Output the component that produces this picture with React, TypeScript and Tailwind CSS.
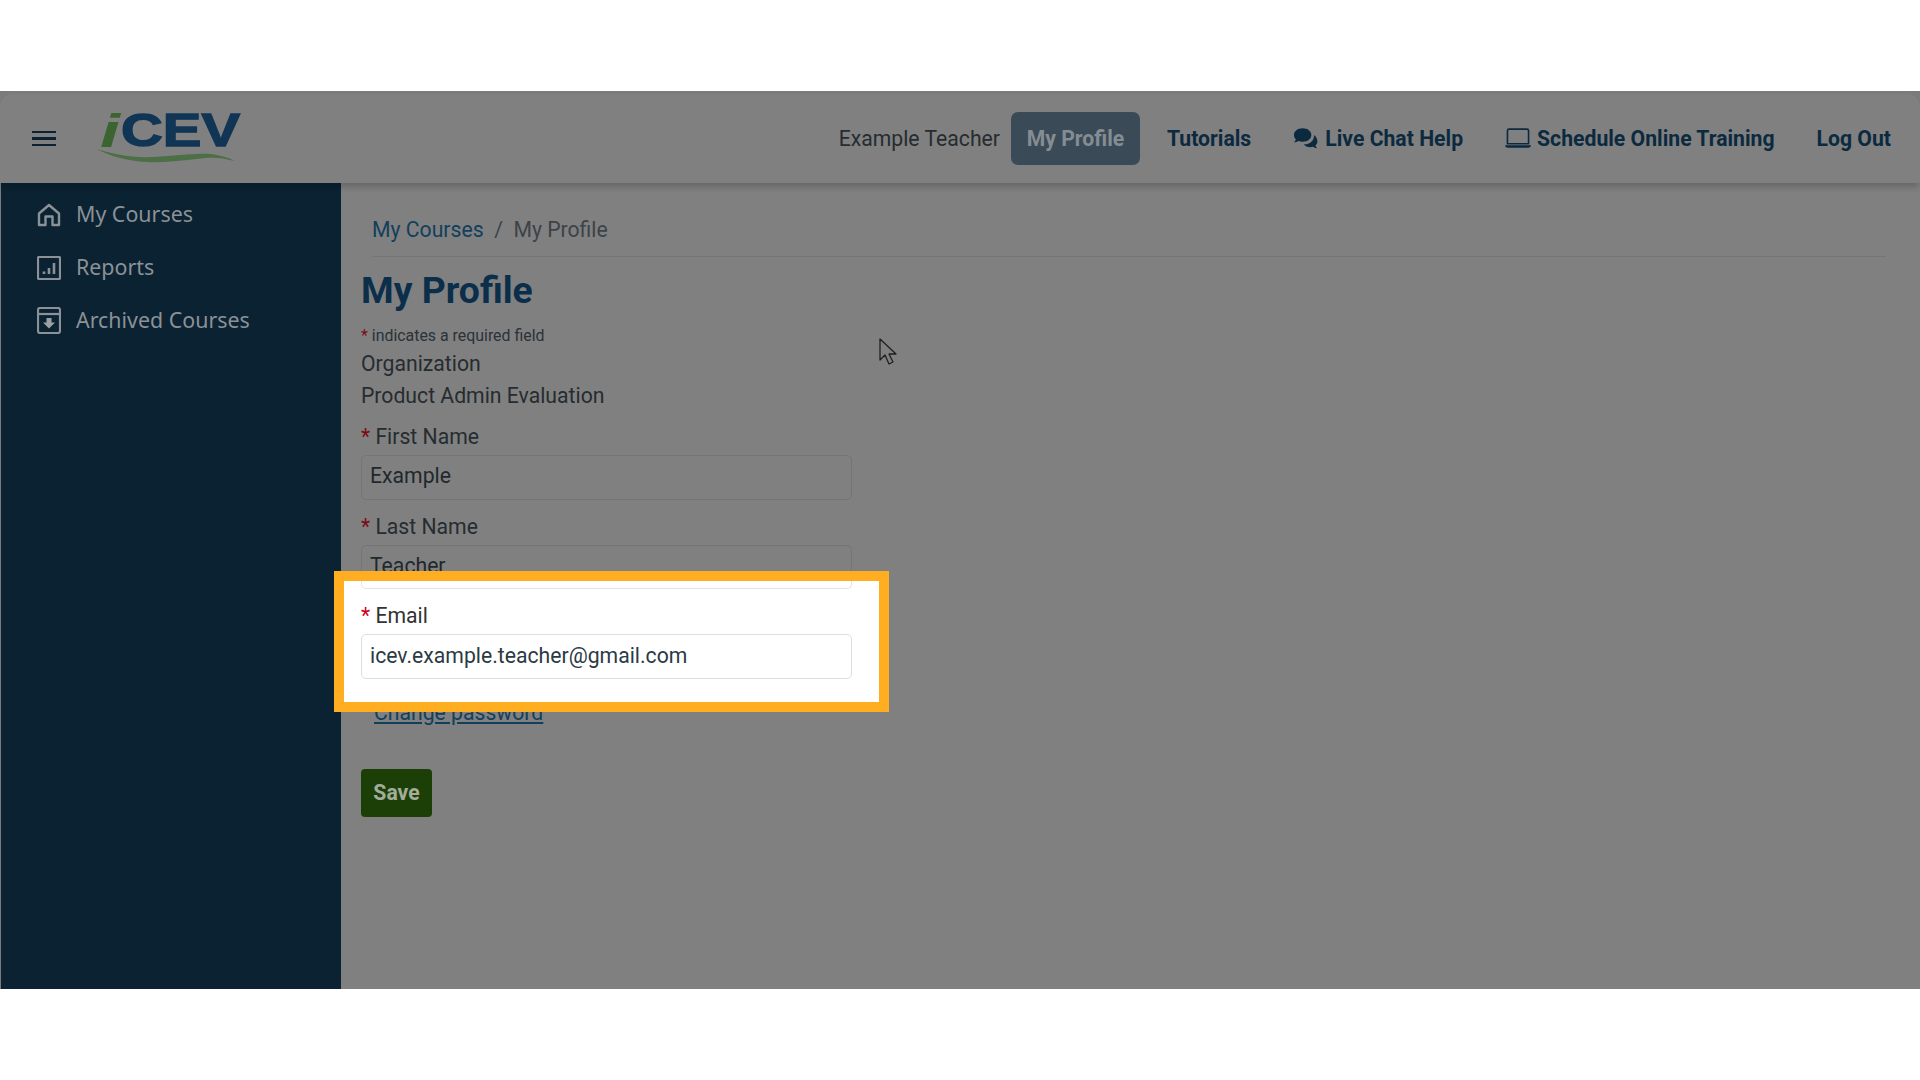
import { BsLaptop } from "react-icons/bs";

const Star = () => <span className="text-[#7a0a14]">*</span>;

function Field({ label, value, className = "mb-[13px]" }: { label: string; value: string; className?: string }) {
  return (
    <div className={className}>
      <label className="block h-[30px] leading-[30px] mb-[3px]"><Star /> {label}</label>
      <div className="h-[45px] w-[491px] rounded-[5px] border border-[#757575] px-[8px] leading-[40px] text-[#20282e]">{value}</div>
    </div>
  );
}

function HomeIcon() {
  return (
    <svg viewBox="0 0 24 24" className="w-[24px] h-[24px]" fill="none" stroke="#8b9196" strokeWidth="2.4">
      <path d="M2 22V10.5L12 2l10 8.5V22h-6.5v-8.5h-7V22z" strokeLinejoin="round" />
    </svg>
  );
}
function ReportIcon() {
  return (
    <svg viewBox="0 0 24 24" className="w-[24px] h-[24px]" fill="none" stroke="#8b9196" strokeWidth="2.2">
      <rect x="1" y="1" width="22" height="22" rx="1" />
      <path d="M7 18v-2.5M12 18v-6M17 18V7" strokeWidth="2.6" />
    </svg>
  );
}
function ArchiveIcon() {
  return (
    <svg viewBox="0 0 24 27" className="w-[24px] h-[27px]" fill="none" stroke="#8b9196" strokeWidth="2.2">
      <rect x="1" y="1" width="22" height="25" rx="2" />
      <path d="M1 7h22" />
      <path d="M9.5 11h5v4.5H18l-6 6-6-6h3.5z" fill="#9aa0a4" stroke="none" />
    </svg>
  );
}

function Logo() {
  return (
    <svg width="150" height="70" viewBox="0 -12 150 70" className="block -mt-[12px]">
      <text x="3" y="35" fontFamily="Liberation Sans" fontWeight="700" fontStyle="italic" fontSize="46" fill="#3c6430" textLength="20" lengthAdjust="spacingAndGlyphs">i</text>
      <text x="24" y="34" fontFamily="Liberation Sans" fontWeight="700" fontSize="46" fill="#103555" stroke="#103555" strokeWidth="1.4" textLength="119" lengthAdjust="spacingAndGlyphs">CEV</text>
      <path d="M0 37c16 5 34 9 56 8 24-1 40-4 58-3 8 1 16 3 24 7-12-3-20-4-30-3-20 2-38 5-58 4C30 49 12 44 0 37z" fill="#4c6f45" />
    </svg>
  );
}

function Nav({ icon, label, className = "" }: { icon?: React.ReactNode; label: string; className?: string }) {
  return (
    <span className={`flex items-center font-bold text-[#0c2a3f] ${className}`}>
      {icon}
      {label}
    </span>
  );
}

export default function App() {
  return (
    <div className="relative w-[1920px] h-[1080px] overflow-hidden bg-white font-['Roboto',sans-serif] text-[21.2px] text-[#262c30]">
      <div className="pt-[91px]">
        <div className="h-[898px] bg-[#7b7b7b] pt-[3px] overflow-hidden flex flex-col">
          <header className="relative z-10 h-[89px] shrink-0 flex items-center bg-[#808080] rounded-t-[12px] shadow-[0_5px_6px_-1px_rgba(0,0,0,0.2)]">
            <div className="ml-[32px] w-[24px] flex flex-col gap-[4px]">
              <div className="h-[2.5px] bg-[#0c2233]" />
              <div className="h-[2.5px] bg-[#0c2233]" />
              <div className="h-[2.5px] bg-[#0c2233]" />
            </div>
            <div className="ml-[41px] mt-[4px]"><Logo /></div>
            <div className="ml-auto flex items-center pr-[29px]">
              <span className="mr-[11px]">Example Teacher</span>
              <span className="flex items-center justify-center w-[129px] h-[53px] rounded-[7px] bg-[#3a4a56] font-bold text-[#848d94]">My Profile</span>
              <Nav label="Tutorials" className="ml-[27px]" />
              <Nav
                className="ml-[42px]"
                label="Live Chat Help"
                icon={
                  <svg viewBox="0 0 28 22" className="w-[27px] h-[22px] mr-[5px]" fill="#0c2a3f">
                    <path d="M10 1C4.8 1 1 4 1 8c0 1.8.8 3.4 2 4.6-.4 1.2-1.2 2.2-2 3 1.8 0 3.4-.6 4.6-1.4 1.3.5 2.8.8 4.4.8 5.2 0 9-3 9-7s-3.8-7-9-7z" />
                    <path d="M21.6 7.5c.1.5.2 1 .2 1.5 0 5-4.6 8.6-10 8.6h-.6c1.4 1.9 3.8 3 6.6 3 1 0 2-.2 2.9-.5 1 .7 2.4 1.4 4.3 1.4-.7-.8-1.4-1.8-1.7-2.8 1.2-1 2-2.4 2-4.1 0-2.9-1.7-5.4-3.7-6.6z" />
                  </svg>
                }
              />
              <Nav
                className="ml-[42px]"
                label="Schedule Online Training"
                icon={<BsLaptop className="w-[26px] h-[26px] mr-[6px]" />}
              />
              <Nav label="Log Out" className="ml-[42px]" />
            </div>
          </header>
          <div className="flex flex-1 min-h-0">
            <aside className="ml-[1px] w-[340px] shrink-0 bg-[#0a2232] pt-[5px] font-['Noto_Sans',sans-serif] text-[#8b9196] text-[21.4px]">
              <div className="flex items-center h-[53px] pl-[36px] gap-[15px]"><HomeIcon />My Courses</div>
              <div className="flex items-center h-[53px] pl-[36px] gap-[15px]"><ReportIcon />Reports</div>
              <div className="flex items-center h-[53px] pl-[36px] gap-[15px]"><ArchiveIcon />Archived Courses</div>
            </aside>
            <main className="flex-1 pl-[20px] pt-[32px] bg-[#808080]">
              <nav className="ml-[11px] mr-[34px] h-[42px] border-b border-[#757575] leading-[30px]">
                <span className="text-[#123f5c]">My Courses</span>
                <span className="text-[#3c4348]">&nbsp;&nbsp;/&nbsp;&nbsp;</span>
                <span className="text-[#3c4348]">My Profile</span>
              </nav>
              <h1 className="mt-[11px] h-[44px] leading-[44px] text-[37.3px] font-bold text-[#0b2e4a]">My Profile</h1>
              <p className="mt-[14px] h-[20px] leading-[20px] text-[15.9px] text-[#2b3238]"><Star /> indicates a required field</p>
              <p className="mt-[2px] leading-[32px]">Organization</p>
              <p className="leading-[32px] mb-[10px]">Product Admin Evaluation</p>
              <Field label="First Name" value="Example" className="mb-[12px]" />
              <Field label="Last Name" value="Teacher" />
              <Field label="Email" value="icev.example.teacher@gmail.com" />
              <a className="block ml-[13px] mt-[17px] w-fit leading-[30px] text-[#123f5c] underline">Change password</a>
              <button className="block mt-[41px] w-[71px] h-[48px] rounded-[4px] bg-[#1c3f08] font-bold text-[#a3ad9a]">Save</button>
            </main>
          </div>
        </div>
      </div>

      {/* highlight over the email field */}
      <div className="absolute left-[334px] top-[571px] w-[555px] h-[141px] border-[10px] border-[#ffae21] bg-white pl-[17px] text-[#333]">
        <div className="h-[8px] w-[491px] rounded-b-[5px] border border-t-0 border-[#e2e2e2]" />
        <label className="block mt-[12px] h-[30px] leading-[30px] mb-[3px]"><span className="text-[#d0021b]">*</span> Email</label>
        <div className="h-[45px] w-[491px] rounded-[5px] border border-[#dedede] px-[8px] leading-[41px] text-[#2b3a44]">icev.example.teacher@gmail.com</div>
      </div>

      {/* mouse pointer */}
      <svg viewBox="0 0 18 27" className="absolute left-[879px] top-[338px] w-[18px] h-[27px]" fill="#808080" stroke="#202020" strokeWidth="1.3">
        <path d="M1 1v21l5-5 4 9 4-2-4-8h7z" strokeLinejoin="round" />
      </svg>
    </div>
  );
}
